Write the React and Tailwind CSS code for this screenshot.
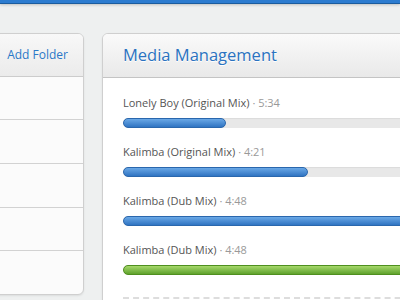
import React from 'react';

const tracks = [
    { title: 'Lonely Boy (Original Mix)', time: '5:34', pct: 103, color: 'blue' },
    { title: 'Kalimba (Original Mix)', time: '4:21', pct: 185, color: 'blue' },
    { title: 'Kalimba (Dub Mix)', time: '4:48', pct: 400, color: 'blue' },
    { title: 'Kalimba (Dub Mix)', time: '4:48', pct: 400, color: 'green' },
];

const Bar = ({ width, color }) => (
    <div className="h-[10px] rounded-full bg-[#e8e8e8] shadow-[inset_0_1px_1px_rgba(0,0,0,0.06)] relative">
        <div
            className={
                color === 'green'
                    ? 'h-full rounded-full border border-[#4f8f1f] bg-gradient-to-b from-[#a6d86a] to-[#5fa22c]'
                    : 'h-full rounded-full border border-[#2a67ad] bg-gradient-to-b from-[#6aa8e6] to-[#2f74c2]'
            }
            style={{ width }}
        />
    </div>
);

const App = () => {
    return (
        <div className="w-[400px] h-[300px] overflow-hidden bg-[#eef0f0] relative" style={{ fontFamily: '"Open Sans", sans-serif' }}>
            {/* top bar */}
            <div className="h-[4px] bg-[#2c7cd0] border-b border-[#1b5c9e] shadow-[0_1px_3px_rgba(0,0,0,0.2)]"></div>

            <div className="flex items-start gap-[18px] pt-[29px]">
                {/* folders */}
                <div className="ml-[-40px] w-[124px] shrink-0 h-[262px] bg-[#fbfbfb] border border-[#cfcfcf] rounded-[6px] shadow-[0_1px_2px_rgba(0,0,0,0.08)] overflow-hidden">
                    <div className="h-[43px] flex items-center justify-end pr-[15px] bg-gradient-to-b from-[#f8f8f8] to-[#ebebeb] border-b border-[#cccccc]">
                        <span className="text-[12px] text-[#2a78c8]">Add Folder</span>
                    </div>
                    <div className="h-[43px] border-b border-[#d2d2d2]"></div>
                    <div className="h-[44px] border-b border-[#d2d2d2]"></div>
                    <div className="h-[44px] border-b border-[#d2d2d2]"></div>
                    <div className="h-[43px] border-b border-[#d2d2d2]"></div>
                </div>

                {/* media */}
                <div className="w-[360px] shrink-0 h-[300px] bg-white border border-[#cfcfcf] rounded-[6px] shadow-[0_1px_2px_rgba(0,0,0,0.08)] overflow-hidden">
                    <div className="h-[44px] flex items-center pl-[20px] bg-gradient-to-b from-[#fafafa] to-[#e9e9e9] border-b border-[#c4c4c4]">
                        <h2 className="text-[16.5px] text-[#2a72c0] [text-shadow:0_1px_0_#fff]">Media Management</h2>
                    </div>
                    <div className="pl-[20px] pt-[17px] flex flex-col gap-[16px]">
                        {tracks.map((t, i) => (
                            <div key={i}>
                                <div className="text-[11px] leading-[15px] text-[#555]">
                                    {t.title} <span className="text-[#999]">· {t.time}</span>
                                </div>
                                <div className="mt-[8px]">
                                    <Bar width={t.pct} color={t.color} />
                                </div>
                            </div>
                        ))}
                        <div className="mt-[6px] border-t-2 border-dashed border-[#dddddd]"></div>
                    </div>
                </div>
            </div>
        </div>
    );
};

export default App;
